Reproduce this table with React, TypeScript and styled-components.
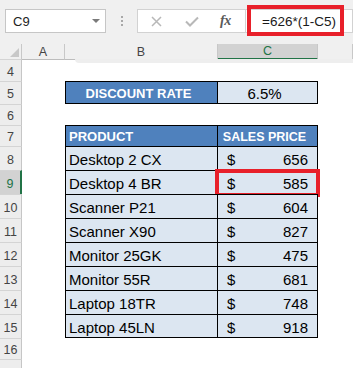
import React from 'react';
import styled, { createGlobalStyle, css } from 'styled-components';

const GlobalStyle = createGlobalStyle`
  html, body { margin: 0; padding: 0; background: #fff; }
  body { font-family: "Liberation Sans", Arial, sans-serif; }
  * { box-sizing: border-box; }
`;

const COLS = '22px 43px 153px 100px 1fr';

const Window = styled.div`
  width: 353px;
  height: 368px;
  overflow: hidden;
  display: flex;
  flex-direction: column;
  background: #fff;
`;

const FormulaBar = styled.div`
  display: flex;
  align-items: flex-start;
  height: 44px;
  flex-shrink: 0;
  padding: 9px 0 0 5px;
  background: #f0f0f0;
`;

const NameBox = styled.div`
  width: 101px;
  height: 24px;
  background: #fff;
  border: 1px solid #c6c6c6;
  display: flex;
  align-items: center;
  justify-content: space-between;
  padding: 0 5px 0 7px;
  font-size: 13px;
  color: #222;
`;

const Caret = styled.span`
  width: 0;
  height: 0;
  border-left: 4px solid transparent;
  border-right: 4px solid transparent;
  border-top: 4px solid #7a7a7a;
`;

const Grip = styled.div`
  width: 31px;
  height: 24px;
  display: flex;
  flex-direction: column;
  align-items: center;
  justify-content: center;
  gap: 2px;
`;

const GripDot = styled.span`
  width: 2px;
  height: 2px;
  background: #a8a8a8;
`;

const FxBox = styled.div`
  width: 109px;
  height: 24px;
  background: #fff;
  border: 1px solid #d2d2d2;
  display: flex;
  align-items: center;
  padding-left: 13px;
  gap: 23px;
`;

const IconSlot = styled.span`
  display: flex;
  align-items: center;
  justify-content: center;
`;

const Fx = styled.span`
  font-family: "Liberation Serif", "Times New Roman", serif;
  font-style: italic;
  font-weight: 700;
  font-size: 14px;
  color: #5a5a5a;
  letter-spacing: -0.5px;
  margin-left: -2px;
`;

const FormulaInput = styled.div`
  position: relative;
  flex: 1;
  height: 24px;
  background: #fff;
  border: 1px solid #d2d2d2;
  border-left: none;
  display: flex;
  align-items: center;
  padding-left: 16px;
  font-size: 13.5px;
  color: #1a1a1a;
`;

const RedFrame = styled.span<{ $w: number; $h: number; $l: number; $t: number }>`
  position: absolute;
  left: ${(p) => p.$l}px;
  top: ${(p) => p.$t}px;
  width: ${(p) => p.$w}px;
  height: ${(p) => p.$h}px;
  border: 4px solid #e8202a;
  pointer-events: none;
`;

const Sheet = styled.div`
  position: relative;
  flex: 1;
  display: flex;
  flex-direction: column;
`;

const TopShade = styled.div`
  position: absolute;
  top: 15px;
  left: 75px;
  right: 0;
  height: 4px;
  background: #eeeeee;
  border-bottom-left-radius: 6px;
`;

const HeaderRow = styled.div`
  display: grid;
  grid-template-columns: ${COLS};
  height: 15px;
  flex-shrink: 0;
  background: #f0f0f0;
`;

const Corner = styled.div`
  border-right: 1px solid #c8c8c8;
  border-bottom: 1px solid #bdbdbd;
  display: flex;
  align-items: flex-end;
  justify-content: flex-end;
  padding: 0 2px 2px 0;
`;

const CornerTri = styled.span`
  width: 0;
  height: 0;
  border-left: 9px solid transparent;
  border-bottom: 9px solid #c8c8c8;
`;

const ColHead = styled.div<{ $sel?: boolean }>`
  border-right: 1px solid #c8c8c8;
  border-bottom: 1px solid #bdbdbd;
  display: flex;
  align-items: center;
  justify-content: center;
  font-size: 12.5px;
  color: #444;
  ${(p) =>
    p.$sel &&
    css`
      background: #d2d2d2;
      color: #217346;
      border-bottom: 2px solid #217346;
    `}
`;

const Row = styled.div<{ $h: number }>`
  display: grid;
  grid-template-columns: ${COLS};
  height: ${(p) => p.$h}px;
  flex-shrink: 0;
`;

const RowHead = styled.div<{ $sel?: boolean }>`
  background: #ededed;
  border-right: 1px solid #c6c6c6;
  border-top: 1px solid #d4d4d4;
  display: flex;
  align-items: center;
  justify-content: center;
  padding-top: 2px;
  font-size: 12.5px;
  color: #444;
  ${(p) =>
    p.$sel &&
    css`
      background: #d2d2d2;
      color: #217346;
      border-right: 2px solid #217346;
    `}
`;

const Blank = styled.div``;

const Cell = styled.div<{
  $head?: boolean;
  $left?: boolean;
  $bottom?: boolean;
  $size?: number;
  $justify?: 'flex-start' | 'center' | 'space-between';
}>`
  position: relative;
  border-right: 1px solid #000;
  border-top: 1px solid #000;
  ${(p) => p.$left && css`border-left: 1px solid #000;`}
  ${(p) => p.$bottom && css`border-bottom: 1px solid #000;`}
  background: ${(p) => (p.$head ? '#4f81bd' : '#dce6f1')};
  color: ${(p) => (p.$head ? '#fff' : '#000')};
  font-weight: ${(p) => (p.$head ? 700 : 400)};
  font-size: ${(p) => (p.$size ? `${p.$size}px` : p.$head ? '13px' : '15px')};
  display: flex;
  align-items: center;
  justify-content: ${(p) => p.$justify ?? 'flex-start'};
  padding: ${(p) => (p.$head ? '1px 9px 0 3px' : '2px 9px 0 3px')};
  white-space: nowrap;
`;

const PriceCell = styled(Cell)`
  padding-left: 9px;
`;

const items = [
  { name: 'Desktop 2 CX', price: 656 },
  { name: 'Desktop 4 BR', price: 585 },
  { name: 'Scanner P21', price: 604 },
  { name: 'Scanner X90', price: 827 },
  { name: 'Monitor 25GK', price: 475 },
  { name: 'Monitor 55R', price: 681 },
  { name: 'Laptop 18TR', price: 748 },
  { name: 'Laptop 45LN', price: 918 },
];

const XIcon = () => (
  <svg width="11" height="11" viewBox="0 0 11 11">
    <path d="M1 1 L10 10 M10 1 L1 10" stroke="#b8b8b8" strokeWidth="1.5" fill="none" />
  </svg>
);

const CheckIcon = () => (
  <svg width="14" height="11" viewBox="0 0 14 11">
    <path d="M1 5.5 L5 9.5 L13 1.5" stroke="#b8b8b8" strokeWidth="2" fill="none" />
  </svg>
);

export default function App() {
  return (
    <>
      <GlobalStyle />
      <Window>
        <FormulaBar>
          <NameBox>
            <span>C9</span>
            <Caret />
          </NameBox>
          <Grip>
            <GripDot />
            <GripDot />
            <GripDot />
          </Grip>
          <FxBox>
            <IconSlot>
              <XIcon />
            </IconSlot>
            <IconSlot>
              <CheckIcon />
            </IconSlot>
            <Fx>fx</Fx>
          </FxBox>
          <FormulaInput>
            =626*(1-C5)
            <RedFrame $l={1} $t={-5} $w={97} $h={31} />
          </FormulaInput>
        </FormulaBar>
        <Sheet>
          <HeaderRow>
            <Corner>
              <CornerTri />
            </Corner>
            <ColHead>A</ColHead>
            <ColHead>B</ColHead>
            <ColHead $sel>C</ColHead>
            <ColHead />
          </HeaderRow>
          <TopShade />
          <Row $h={22}>
            <RowHead>4</RowHead>
          </Row>
          <Row $h={23}>
            <RowHead>5</RowHead>
            <Blank />
            <Cell $head $left $bottom $justify="center">
              DISCOUNT RATE
            </Cell>
            <Cell $bottom $justify="center" $size={15}>
              6.5%
            </Cell>
          </Row>
          <Row $h={21}>
            <RowHead>6</RowHead>
          </Row>
          <Row $h={21}>
            <RowHead>7</RowHead>
            <Blank />
            <Cell $head $left>
              PRODUCT
            </Cell>
            <Cell $head $justify="center" $size={12.5}>
              SALES PRICE
            </Cell>
          </Row>
          {items.map((it, i) => {
            const last = i === items.length - 1;
            const sel = i === 1;
            return (
              <Row $h={24} key={it.name}>
                <RowHead $sel={sel}>{8 + i}</RowHead>
                <Blank />
                <Cell $left $bottom={last}>
                  {it.name}
                </Cell>
                <PriceCell $bottom={last} $justify="space-between">
                  <span>$</span>
                  <span>{it.price}</span>
                  {sel && <RedFrame $l={-3} $t={-2} $w={105} $h={28} />}
                </PriceCell>
              </Row>
            );
          })}
          <Row $h={21}>
            <RowHead>16</RowHead>
          </Row>
          <Row $h={21}>
            <RowHead />
          </Row>
        </Sheet>
      </Window>
    </>
  );
}
